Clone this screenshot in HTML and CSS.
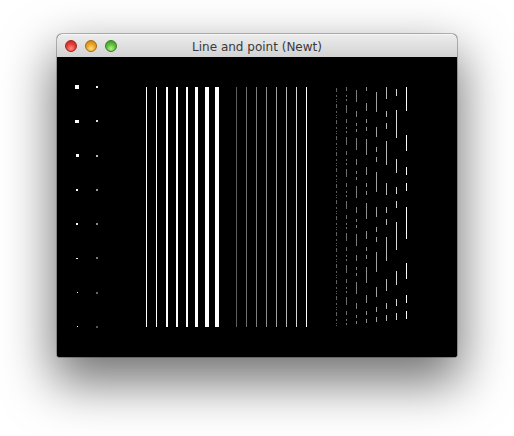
FILE: index.html
```html
<!DOCTYPE html>
<html>
<head>
<meta charset="utf-8">
<title>Line and point (Newt)</title>
<link rel="stylesheet" href="styles.css">
</head>
<body>
<div class="stage">
  <div class="window">
    <div class="titlebar">
      <div class="lights">
        <span class="light red"></span>
        <span class="light yellow"></span>
        <span class="light green"></span>
      </div>
      <div class="title">Line and point (Newt)</div>
      <div class="spacer"></div>
    </div>
    <div class="canvas">
      <svg class="gl" width="400" height="300" viewBox="0 0 400 300" shape-rendering="crispEdges">
        <rect width="400" height="300" fill="#000"/>
        <!-- points: varying size -->
        <rect x="18" y="28" width="4" height="4" fill="#fff"/>
        <rect x="18" y="63" width="4" height="3" fill="#fff"/>
        <rect x="19" y="97" width="3" height="3" fill="#fff"/>
        <rect x="19" y="132" width="2" height="2" fill="#fff"/>
        <rect x="19" y="166" width="2" height="2" fill="#fff"/>
        <rect x="19" y="201" width="2" height="1" fill="#fff"/>
        <rect x="20" y="235" width="1" height="1" fill="#fff"/>
        <rect x="20" y="269" width="1" height="1" fill="#fff"/>
        <!-- points: smoothed -->
        <rect x="39" y="29" width="2" height="2" fill="#ffffff"/>
        <rect x="39" y="63" width="2" height="2" fill="#dddddd"/>
        <rect x="39" y="98" width="2" height="2" fill="#bbbbbb"/>
        <rect x="39" y="132" width="2" height="2" fill="#999999"/>
        <rect x="39" y="166" width="2" height="2" fill="#888888"/>
        <rect x="39" y="200" width="2" height="2" fill="#777777"/>
        <rect x="39" y="235" width="2" height="2" fill="#666666"/>
        <rect x="39" y="269" width="2" height="2" fill="#555555"/>
        <!-- lines: varying width -->
        <rect x="89" y="30" width="1" height="240" fill="#fff"/>
        <rect x="99" y="30" width="1" height="240" fill="#fff"/>
        <rect x="109" y="30" width="2" height="240" fill="#fff"/>
        <rect x="119" y="30" width="2" height="240" fill="#fff"/>
        <rect x="129" y="30" width="2" height="240" fill="#fff"/>
        <rect x="138" y="30" width="3" height="240" fill="#fff"/>
        <rect x="148" y="30" width="4" height="240" fill="#fff"/>
        <rect x="158" y="30" width="4" height="240" fill="#fff"/>
        <!-- lines: varying intensity -->
        <rect x="179" y="30" width="1" height="240" fill="#5e5e5e"/>
        <rect x="189" y="30" width="1" height="240" fill="#6e6e6e"/>
        <rect x="199" y="30" width="1" height="240" fill="#7e7e7e"/>
        <rect x="209" y="30" width="1" height="240" fill="#8e8e8e"/>
        <rect x="219" y="30" width="1" height="240" fill="#a0a0a0"/>
        <rect x="229" y="30" width="1" height="240" fill="#b6b6b6"/>
        <rect x="239" y="30" width="1" height="240" fill="#d6d6d6"/>
        <rect x="249" y="30" width="1" height="240" fill="#ffffff"/>
        <!-- lines: stippled, factor 1..8 -->
        <line x1="279.5" y1="30" x2="279.5" y2="270" stroke="#5e5e5e" stroke-dasharray="4 3 2 2 1 1 1 2" stroke-dashoffset="15"/>
        <line x1="289.5" y1="30" x2="289.5" y2="270" stroke="#6e6e6e" stroke-dasharray="8 6 4 4 2 2 2 4" stroke-dashoffset="14"/>
        <line x1="299.5" y1="30" x2="299.5" y2="270" stroke="#7e7e7e" stroke-dasharray="12 9 6 6 3 3 3 6" stroke-dashoffset="45"/>
        <line x1="309.5" y1="30" x2="309.5" y2="270" stroke="#8e8e8e" stroke-dasharray="16 12 8 8 4 4 4 8" stroke-dashoffset="12"/>
        <line x1="319.5" y1="30" x2="319.5" y2="270" stroke="#a0a0a0" stroke-dasharray="20 15 10 10 5 5 5 10" stroke-dashoffset="75"/>
        <line x1="329.5" y1="30" x2="329.5" y2="270" stroke="#b6b6b6" stroke-dasharray="24 18 12 12 6 6 6 12" stroke-dashoffset="42"/>
        <line x1="339.5" y1="30" x2="339.5" y2="270" stroke="#d6d6d6" stroke-dasharray="28 21 14 14 7 7 7 14" stroke-dashoffset="89"/>
        <line x1="349.5" y1="30" x2="349.5" y2="270" stroke="#ffffff" stroke-dasharray="32 24 16 16 8 8 8 16" stroke-dashoffset="8"/>
      </svg>
    </div>
  </div>
</div>
</body>
</html>
```
FILE: styles.css
```css
html, body {
  margin: 0;
  padding: 0;
  background: #ffffff;
}

.stage {
  width: 514px;
  height: 436px;
  display: flex;
  justify-content: center;
  align-items: flex-start;
  padding-top: 34px;
  box-sizing: border-box;
}

.window {
  width: 400px;
  display: flex;
  flex-direction: column;
  border-radius: 5px 5px 3px 3px;
  box-shadow: 0 0 0 1px rgba(0,0,0,0.25), 0 22px 50px 4px rgba(0,0,0,0.55);
  overflow: hidden;
  background: #000;
}

.titlebar {
  height: 23px;
  display: grid;
  grid-template-columns: 1fr auto 1fr;
  align-items: center;
  background: linear-gradient(#ececec 0%, #e2e2e2 40%, #d2d2d2 100%);
  border-top: 1px solid #f6f6f6;
  box-sizing: border-box;
}

.lights {
  display: flex;
  gap: 8px;
  padding-left: 8px;
  align-items: center;
}

.light {
  width: 12px;
  height: 12px;
  border-radius: 50%;
  box-sizing: border-box;
}

.red {
  background: radial-gradient(circle at 50% 75%, #ff8b80 0%, #e8453c 45%, #b81d18 100%);
  border: 1px solid #9c2420;
}

.yellow {
  background: radial-gradient(circle at 50% 75%, #ffe07a 0%, #eba82a 45%, #c07a10 100%);
  border: 1px solid #a26b13;
}

.green {
  background: radial-gradient(circle at 50% 75%, #b7f08e 0%, #62c13f 45%, #2f8f1e 100%);
  border: 1px solid #3a7c26;
}

.title {
  font-family: "DejaVu Sans", "Liberation Sans", sans-serif;
  font-size: 12px;
  color: #3a3a3a;
  white-space: nowrap;
  padding-top: 1px;
}

.canvas {
  width: 400px;
  height: 300px;
  background: #000;
}

.gl {
  display: block;
}
```
